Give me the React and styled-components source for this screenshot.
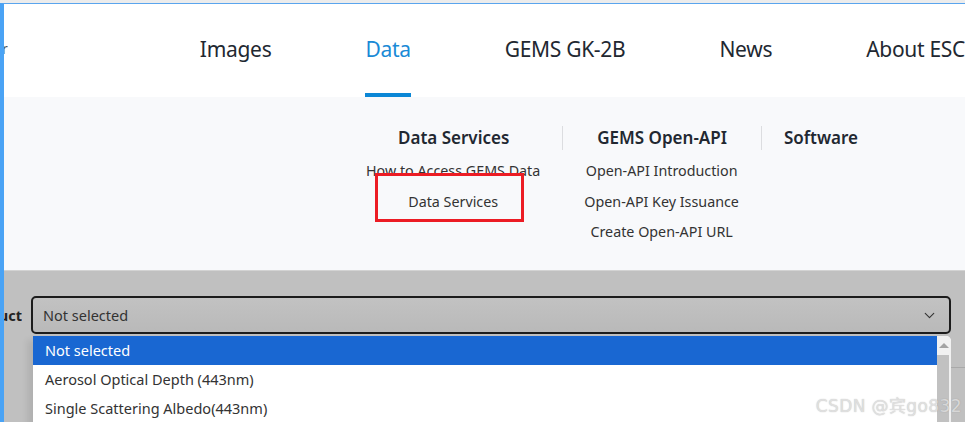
import React from "react";
import styled, { createGlobalStyle } from "styled-components";
import { ChevronDown } from "lucide-react";

const navItems = [
	{ id: 1, name: "Images" },
	{ id: 2, name: "Data", active: true },
	{ id: 3, name: "GEMS GK-2B" },
	{ id: 4, name: "News" },
	{ id: 5, name: "About ESC" },
];

const menuColumns = [
	{
		id: 1,
		title: "Data Services",
		links: ["How to Access GEMS Data", "Data Services"],
		marked: true,
	},
	{
		id: 2,
		title: "GEMS Open-API",
		links: ["Open-API Introduction", "Open-API Key Issuance", "Create Open-API URL"],
		divider: true,
	},
	{ id: 3, title: "Software", links: [], divider: true },
];

const options = [
	"Not selected",
	"Aerosol Optical Depth (443nm)",
	"Single Scattering Albedo(443nm)",
];

const App = () => {
	return (
		<>
			<GlobalStyle />
			<Frame>
				<Window>
					<Header>
						<Logo>
							<span>Environmental Satellite Center</span>
						</Logo>
						<Nav>
							{navItems.map(({ id, name, active }) => (
								<NavItem key={id} $active={active}>
									{name}
								</NavItem>
							))}
						</Nav>
					</Header>

					<MegaMenu>
						{menuColumns.map(({ id, title, links, divider, marked }) => (
							<MenuColumn key={id}>
								<MenuTitle $divider={divider}>{title}</MenuTitle>
								{links.map((link) => (
									<MenuLink key={link}>{link}</MenuLink>
								))}
								{marked && <Highlight />}
							</MenuColumn>
						))}
					</MegaMenu>

					<Backdrop>
						<FormRow>
							<Label>
								<span>Product</span>
							</Label>
							<SelectWrap>
								<SelectBox>
									<span>Not selected</span>
									<ChevronDown size={17} strokeWidth={1.6} color="#333" />
								</SelectBox>
								<Dropdown>
									<OptionList>
										{options.map((opt, i) => (
											<Option key={opt} $selected={i === 0}>
												{opt}
											</Option>
										))}
									</OptionList>
									<Scrollbar>
										<ScrollArrow />
										<ScrollThumb />
									</Scrollbar>
								</Dropdown>
							</SelectWrap>
						</FormRow>
						<NextRowLine />
					</Backdrop>
					<Watermark>CSDN @宾go832</Watermark>
				</Window>
			</Frame>
		</>
	);
};

const GlobalStyle = createGlobalStyle`
	html, body {
		margin: 0;
		padding: 0;
		width: 965px;
		height: 422px;
		overflow: hidden;
		background: #fff;
	}
	* {
		box-sizing: border-box;
	}
	body {
		font-family: "Noto Sans", "Noto Sans CJK KR", sans-serif;
	}
`;

const Frame = styled.div`
	width: 965px;
	height: 422px;
	border-top: 3px solid #ececec;
	overflow: hidden;
`;

const Window = styled.div`
	position: relative;
	height: 419px;
	border-top: 1px solid #5aa5ee;
	border-left: 4px solid #4aa3f5;
	display: flex;
	flex-direction: column;
	background: #fff;
`;

const Header = styled.header`
	display: flex;
	align-items: stretch;
	height: 93px;
	background: #fff;
`;

const Logo = styled.div`
	width: 8px;
	overflow: hidden;
	display: flex;
	justify-content: flex-end;
	align-items: center;
	padding-bottom: 4px;
	font-size: 14px;
	color: #555;
	white-space: nowrap;
`;

const Nav = styled.nav`
	display: flex;
	gap: 94px;
	margin-left: 192px;
	white-space: nowrap;
`;

const NavItem = styled.div`
	display: flex;
	align-items: center;
	height: 93px;
	font-size: 21px;
	font-weight: 400;
	letter-spacing: -0.3px;
	color: ${({ $active }) => ($active ? "#1a8ad6" : "#222831")};
	border-bottom: 4px solid ${({ $active }) => ($active ? "#0b87d6" : "transparent")};
`;

const MegaMenu = styled.div`
	display: flex;
	align-items: flex-start;
	height: 173px;
	padding: 29px 0 0 340px;
	background: #f8f9fb;
`;

const MenuColumn = styled.div`
	position: relative;
	display: flex;
	flex-direction: column;
	align-items: stretch;
	text-align: center;
`;

const MenuTitle = styled.div`
	padding: 0 22px;
	height: 24px;
	line-height: 24px;
	font-size: 17px;
	font-weight: 600;
	color: #222831;
	white-space: nowrap;
	border-left: 1px solid ${({ $divider }) => ($divider ? "#dcdde0" : "transparent")};
	margin-bottom: 6px;
`;

const MenuLink = styled.div`
	padding: 0 22px;
	height: 30.5px;
	line-height: 30px;
	font-size: 14.3px;
	color: #333;
	white-space: nowrap;
`;

const Highlight = styled.div`
	position: absolute;
	left: 31px;
	top: 47px;
	width: 149px;
	height: 49px;
	border: 3px solid #ec1c24;
`;

const Backdrop = styled.div`
	position: relative;
	flex: 1;
	background: #c0c0c0;
	border-top: 1px solid #d3d3d3;
	padding-top: 25px;
`;

const FormRow = styled.div`
	display: flex;
	align-items: center;
	gap: 9px;
`;

const Label = styled.div`
	width: 18px;
	overflow: hidden;
	display: flex;
	justify-content: flex-end;
	font-size: 14.5px;
	font-weight: 700;
	color: #222;
	white-space: nowrap;
`;

const SelectWrap = styled.div`
	position: relative;
	width: 920px;
`;

const SelectBox = styled.div`
	display: flex;
	align-items: center;
	justify-content: space-between;
	height: 38px;
	padding: 0 11px 0 10px;
	border: 2px solid #1c1c1c;
	border-radius: 5px;
	background: linear-gradient(#c2c2c2, #b9b9b9);
	font-size: 14.5px;
	color: #333;
`;

const Dropdown = styled.div`
	position: absolute;
	left: 2px;
	top: 40px;
	width: 918px;
	display: flex;
	background: #fff;
	border-top-right-radius: 5px;
	box-shadow: -6px 4px 6px rgba(0, 0, 0, 0.08);
	z-index: 2;
`;

const OptionList = styled.ul`
	flex: 1;
	margin: 0;
	padding: 0;
	list-style: none;
`;

const Option = styled.li`
	height: 29px;
	line-height: 28px;
	padding-left: 12px;
	font-size: 14.5px;
	color: ${({ $selected }) => ($selected ? "#fff" : "#333")};
	background: ${({ $selected }) => ($selected ? "#1967d2" : "#fff")};
`;

const Scrollbar = styled.div`
	width: 14px;
	display: flex;
	flex-direction: column;
	background: #f1f1f1;
	border-top-right-radius: 5px;
`;

const ScrollArrow = styled.div`
	height: 19px;
	display: flex;
	align-items: center;
	justify-content: center;
	&::before {
		content: "";
		border-left: 5px solid transparent;
		border-right: 5px solid transparent;
		border-bottom: 5px solid #a3a3a3;
	}
`;

const ScrollThumb = styled.div`
	flex: 1;
	min-height: 70px;
	margin: 0 2px 0 0;
	background: #c1c1c1;
`;

const NextRowLine = styled.div`
	margin-top: 33px;
	margin-left: 947px;
	border-top: 1px solid #a9a9a9;
`;

const Watermark = styled.div`
	position: absolute;
	right: 3px;
	bottom: 5px;
	z-index: 3;
	font-family: "DejaVu Sans", "Noto Sans CJK SC", sans-serif;
	font-size: 17px;
	color: rgba(232, 232, 232, 0.8);
	text-shadow: 0 0 1px rgba(110, 110, 110, 0.5);
	letter-spacing: 0.4px;
`;

export default App;
